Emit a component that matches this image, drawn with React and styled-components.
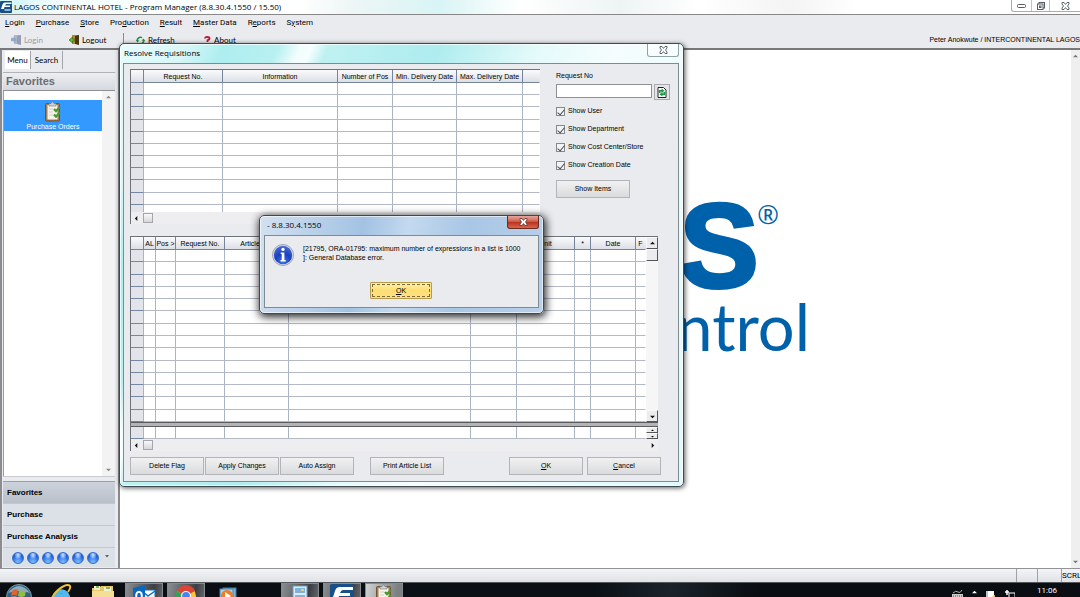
import React from 'react';
import styled, { createGlobalStyle, css } from 'styled-components';

const SANS = '"Liberation Sans", Arial, sans-serif';
const TOOL_FONT = 'Lato, "Liberation Sans", sans-serif';
const SEGOE = '"Open Sans", "Noto Sans", sans-serif';
const MENU_FONT = 'Roboto, "Liberation Sans", sans-serif';

const GlobalStyle = createGlobalStyle`
  * { box-sizing: border-box; }
  html, body { margin: 0; height: 100%; overflow: hidden; }
  #root { height: 100%; }
  body { font-family: ${SANS}; font-size: 7px; line-height: 10px; color: #000; background: #eaebef; }
  button, input { font: inherit; color: inherit; margin: 0; padding: 0; }
  svg { display: block; flex: none; }
`;

const Screen = styled.div`
  position: relative;
  display: flex;
  flex-direction: column;
  height: 100%;
  overflow: hidden;
`;

/* ---------- application frame ---------- */

const TitleBar = styled.header`
  display: flex;
  align-items: center;
  height: 15px;
  flex: none;
  border-bottom: 1px solid #8a8788;
  font-family: ${SEGOE};
  font-size: 8px;
  background: linear-gradient(90deg, #cdf3f6 0, #f4fdfd 60px, #fff 300px, #eef6f6 350px, #d9f4f5 440px, #fff 520px, #eef4f4 620px, #fff 700px, #f4f4f4 790px, #fff 860px);
`;

const AppTitle = styled.h1`
  margin: 0 auto 0 2px;
  font: inherit;
`;

const Caption = styled.div`
  display: flex;
  align-self: flex-start;
  height: 12px;
  border: 1px solid #a3b0b2;
  border-top: 0;
  border-right: 0;
  border-radius: 0 0 0 3px;
`;

const CaptionButton = styled.button`
  display: flex;
  align-items: center;
  justify-content: center;
  width: ${(p) => p.$w || 19}px;
  border: 0;
  border-left: ${(p) => (p.$first ? 0 : '1px solid #b9c4c6')};
  background: transparent;
`;

const MenuBar = styled.nav`
  display: flex;
  gap: 11px;
  align-items: center;
  height: 17px;
  flex: none;
  padding: 0 0 1px 5px;
  font-family: ${MENU_FONT};
  font-size: 8px;
`;

const MenuLink = styled.a`
  color: #000;
  text-decoration: none;
`;

const Toolbar = styled.div`
  display: flex;
  align-items: center;
  height: 18px;
  flex: none;
  border-bottom: 2px solid #777879;
`;

const ToolButton = styled.button`
  display: flex;
  align-items: center;
  gap: ${(p) => p.$gap || 2}px;
  width: ${(p) => p.$w}px;
  padding-left: ${(p) => p.$pad || 0}px;
  border: 0;
  background: transparent;
  font: 8px/10px ${TOOL_FONT};
  color: ${(p) => (p.disabled ? '#9a9ca2' : '#000')};
`;

const ToolDivider = styled.span`
  width: 1px;
  height: 14px;
  background: #8c8c90;
`;

const UserName = styled.span`
  margin-left: auto;
  white-space: nowrap;
`;

const Main = styled.main`
  display: flex;
  flex: 1;
  min-height: 0;
`;

/* ---------- sidebar ---------- */

const Sidebar = styled.aside`
  display: flex;
  flex-direction: column;
  width: 116px;
  flex: none;
  padding: 0 1px 1px 1px;
  border-left: 2px solid #8b8c90;
  background: #eaebef;
`;

const Tabs = styled.div`
  display: flex;
  height: 22px;
  padding: 1px 0 3px 2px;
`;

const Tab = styled.button`
  width: ${(p) => p.$w}px;
  border: 0;
  border-right: 1px solid #a4a5a9;
  background: ${(p) => (p.$active ? '#fff' : 'transparent')};
  font: 8px/10px ${TOOL_FONT};
`;

const SideHeading = styled.h2`
  margin: 0;
  height: 19px;
  padding-left: 3px;
  border-top: 1px solid #b0b2b8;
  border-bottom: 1px solid #8d9097;
  background: linear-gradient(#eceef1, #d5d8de);
  font: bold 11px/17px ${SANS};
  color: #6b6d72;
`;

const ShortcutList = styled.div`
  display: flex;
  flex: 1;
  margin-bottom: 4px;
  border-bottom: 1px solid #c9cbd0;
  background: #fff;
`;

const Shortcuts = styled.div`
  flex: 1;
  padding-top: 9px;
  border-left: 1px solid #9a9ca0;
`;

const Shortcut = styled.button`
  display: flex;
  flex-direction: column;
  align-items: center;
  width: 100%;
  height: 31px;
  padding-top: 1px;
  border: 0;
  background: #3399ff;
  color: #fff;
`;

const Track = styled.div`
  display: flex;
  flex-direction: column;
  justify-content: space-between;
  align-items: center;
  width: ${(p) => p.$w}px;
  flex: none;
  padding: 4px 0;
  background: ${(p) => p.$bg};
`;

const GroupButton = styled.button`
  height: 22px;
  padding-left: 4px;
  border: 0;
  border-top: 1px solid ${(p) => (p.$active ? '#9a9fa8' : '#c3c8d0')};
  background: ${(p) => (p.$active ? 'linear-gradient(#cdd3dc, #b9c0ca)' : '#dce0e7')};
  font: bold 8px/10px ${SANS};
  text-align: left;
`;

const DotRow = styled.div`
  display: flex;
  align-items: center;
  gap: 3px;
  height: 20px;
  padding-left: 9px;
  border-top: 1px solid #c3c8d0;
  background: #dce0e7;
`;

const Dot = styled.button`
  width: 12px;
  height: 12px;
  border: 1px solid #3a6cc8;
  border-radius: 50%;
  background: radial-gradient(ellipse at 50% 20%, #cfe4ff 0, #5b97f2 35%, transparent 50%), radial-gradient(circle at 50% 90%, #7cc4ff, #1f5fdc 65%);
`;

const MoreButton = styled.button`
  display: flex;
  margin: 0 0 3px 3px;
  border: 0;
  background: transparent;
`;

const Canvas = styled.section`
  display: flex;
  justify-content: space-between;
  flex: 1;
  min-width: 0;
  margin-left: 2px;
  border-left: 2px solid #88898c;
  background: #fff;
`;

const Brand = styled.div`
  display: flex;
  flex-direction: column;
  align-items: flex-end;
  width: 690px;
  padding-top: 144px;
  color: #0061ab;
`;

const BrandTop = styled.div`
  display: flex;
  margin-right: 31px;
  font: bold 118px/104px ${SANS};
  -webkit-text-stroke: 4px #0061ab;
`;

const Registered = styled.span`
  margin-left: -1px;
  font: 26px/40px ${SEGOE};
  -webkit-text-stroke: 0;
`;

const BrandSub = styled.div`
  font: 65px/56px Lato, sans-serif;
`;

/* ---------- status bar and taskbar ---------- */

const StatusBar = styled.footer`
  display: flex;
  height: 14px;
  flex: none;
  border-top: 1px solid #929396;
  background: linear-gradient(#f4f5f7, #dfe1e5);
  font-family: ${MENU_FONT};
  font-size: 8px;
  line-height: 13px;
`;

const StatusCell = styled.span`
  width: ${(p) => p.$w}px;
  margin-left: ${(p) => (p.$first ? 'auto' : 0)};
  border-left: 1px solid #9fa1a5;
`;

const Taskbar = styled.div`
  display: flex;
  height: 15px;
  flex: none;
  border-top: 1px solid #53585d;
  background: linear-gradient(100deg, #0a0e13, #0b1016 55%, #1b222a 62%, #0a0e13 70%);
  overflow: hidden;
`;

const TaskItem = styled.button`
  display: flex;
  justify-content: center;
  width: 38px;
  height: 30px;
  margin-right: ${(p) => p.$after || 4}px;
  padding-top: 1px;
  border: 0;
  background: transparent;
  ${(p) => p.$open && css`
    border: 1px solid #868a8e;
    padding-top: 0;
    background: linear-gradient(100deg, #8c8f92, #3b3f43 70%, #6c7074);
  `}
  ${(p) => p.$current && css`
    background: linear-gradient(100deg, #d0d2d3, #7c8083 80%);
  `}
`;

const Tray = styled.div`
  display: flex;
  align-items: flex-start;
  gap: 9px;
  margin-left: auto;
  padding: 7px 5px 0 0;
`;

const Clock = styled.time`
  margin: -4px 18px 0 13px;
  font: 8px/10px ${MENU_FONT};
  color: #fff;
`;

/* ---------- windows ---------- */

const Window = styled.section`
  position: absolute;
  display: flex;
  flex-direction: column;
  border: 1px solid #3f4a50;
  border-radius: 5px;
`;

const RequisitionWindow = styled(Window)`
  left: 119px;
  top: 43px;
  width: 565px;
  padding: 0 4px 4px 3px;
  background: linear-gradient(115deg, #e6fbfc, #d8f7f8 60px, #aeeef0 95px, #b8f0f1 145px, #f2fdfd 165px, #f6feff 175px, #bff1f2 190px, #aeecef 290px, #e4fafa 380px, #f5fdfe 450px, #dff9fb);
  box-shadow: 1px 1px 5px rgba(0, 0, 0, 0.65), inset 0 0 0 1px rgba(255, 255, 255, 0.7);
`;

const MessageWindow = styled(Window)`
  left: 259px;
  top: 215px;
  width: 285px;
  padding: 0 4px 5px;
  background: linear-gradient(100deg, #d3e1f1, #a3c2e3 35%, #c3d9ef 50%, #a9c6e5 70%, #b9d1ea);
  box-shadow: 1px 2px 8px 1px rgba(0, 0, 0, 0.85), inset 0 0 0 1px rgba(255, 255, 255, 0.6);
`;

const WindowTitle = styled.header`
  display: flex;
  justify-content: space-between;
  height: 19px;
  font-family: ${SEGOE};
  font-size: 8px;
`;

const WindowName = styled.h2`
  margin: 0;
  padding-left: ${(p) => p.$pad || 1}px;
  font: inherit;
  line-height: 18px;
`;

const CloseButton = styled.button`
  display: flex;
  align-items: center;
  justify-content: center;
  width: 32px;
  height: 13px;
  border: 1px solid #8fa2a6;
  border-top: 0;
  border-radius: 0 0 3px 3px;
  background: rgba(255, 255, 255, 0.5);
  ${(p) => p.$danger && css`
    border-color: #6b2a24;
    background: linear-gradient(#e5a79b, #d1604e 45%, #b9301b 50%, #d8664c);
  `}
`;

const WindowBody = styled.div`
  padding: 5px 6px 6px;
  border: 1px solid #7e8c92;
  background: #eaebef;
`;

const TopArea = styled.div`
  display: flex;
  gap: 16px;
  margin-bottom: 12px;
`;

const GridBox = styled.div`
  width: ${(p) => p.$w}px;
  flex: none;
  border-left: 1px solid #6f7278;
  border-top: 1px solid #6f7278;
  background: #fff;
`;

const GridView = styled.div`
  display: flex;
  height: ${(p) => p.$h}px;
  overflow: hidden;
`;

const Table = styled.table`
  width: 100%;
  height: ${(p) => p.$h}px;
  flex: 1;
  min-width: 0;
  table-layout: fixed;
  border-collapse: separate;
  border-spacing: 0;
  line-height: 9px;

  th, td {
    padding: 0;
    border-right: 1px solid #a9b3c2;
    border-bottom: 1px solid #b3bac6;
    white-space: nowrap;
  }
  th {
    height: 13px;
    border-color: #75849b;
    background: linear-gradient(#fafbfc, #dcdfe6);
    font-weight: normal;
  }
  td:first-child {
    background: #e2e4ea;
    border-bottom-color: #7487a5;
  }
  td:last-child, th:last-child { border-right-color: transparent; }
`;

const HScroll = styled.div`
  display: flex;
  align-items: center;
  height: 12px;
  padding: 0 3px;
  background: #eeeef0;
`;

const HThumb = styled.span`
  width: 10px;
  height: 10px;
  margin: 0 auto 0 4px;
  border: 1px solid #a5a6aa;
  background: linear-gradient(#f8f8f9, #d6d7da);
`;

const VScroll = styled.div`
  display: flex;
  flex-direction: column;
  width: 12px;
  background: #f6f6f7;
`;

const ScrollButton = styled.button`
  display: flex;
  align-items: center;
  justify-content: center;
  width: 12px;
  height: ${(p) => p.$h || 12}px;
  margin-top: ${(p) => (p.$end ? 'auto' : 0)};
  border: 1px solid #f9f9f9;
  border-right-color: #55565a;
  border-bottom-color: #55565a;
  background: #ececee;
`;

const Splitter = styled.div`
  height: 5px;
  border-top: 1px solid #5b5c60;
  border-bottom: 1px solid #5b5c60;
  background: #b4b4b7;
`;

const Filters = styled.form`
  display: flex;
  flex-direction: column;
  align-items: flex-start;
  padding-top: 2px;
`;

const SearchRow = styled.div`
  display: flex;
  gap: 2px;
  margin: 3px 0 2px;
`;

const RequestInput = styled.input`
  width: 96px;
  height: 14px;
  border: 1px solid #8f9196;
  background: #fff;
`;

const IconButton = styled.button`
  display: flex;
  align-items: center;
  justify-content: center;
  width: 16px;
  height: 16px;
  border: 1px solid #a9aaad;
  background: #e4e5e8;
`;

const CheckLabel = styled.label`
  display: flex;
  align-items: center;
  gap: 3px;
  height: 18px;
`;

const CheckBox = styled.input`
  appearance: none;
  display: flex;
  justify-content: center;
  width: 9px;
  height: 9px;
  border: 1px solid #85888e;
  background: #f2f3f5;

  &:checked::after {
    content: '';
    width: 3px;
    height: 6px;
    border: solid #4a4d55;
    border-width: 0 1px 1px 0;
    transform: rotate(40deg);
  }
`;

const PushButton = styled.button`
  width: 74px;
  height: 18px;
  margin-left: ${(p) => p.$gap || 0}px;
  border: 1px solid #b3b4b7;
  background: linear-gradient(#f1f1f2, #dadbdd);
`;

const ShowButton = styled(PushButton)`
  margin-top: 6px;
`;

const Actions = styled.div`
  display: flex;
  margin: 6px 11px 0 0;
`;

const Group = styled.div`
  display: flex;
  gap: ${(p) => p.$gap}px;
  margin-left: ${(p) => (p.$end ? 'auto' : 0)};
`;

const MessageBody = styled(WindowBody)`
  display: flex;
  flex-direction: column;
  align-items: center;
  padding: 8px 8px 8px 7px;
`;

const MessageRow = styled.div`
  display: flex;
  gap: 9px;
  width: 100%;
  height: 38px;
`;

const MessageText = styled.p`
  margin: 0;
  line-height: 9px;
  white-space: nowrap;
`;

const DefaultButton = styled.button`
  width: 62px;
  height: 17px;
  border: 1px solid #b79a4a;
  border-radius: 1px;
  outline: 1px dashed #7d6a34;
  outline-offset: -3px;
  background: linear-gradient(#fff0b0, #ffdf72 50%, #fbe08a);
`;

/* ---------- drawings ---------- */

const Arrow = ({ dir = 'up', color = '#111', size = 5 }) => {
  const shapes = { up: '0,4 3,1 6,4', down: '0,2 3,5 6,2', left: '4,0 1,3 4,6', right: '2,0 5,3 2,6' };
  return <svg width={size} height={size} viewBox="0 0 6 6"><polygon points={shapes[dir]} fill={color} /></svg>;
};

const BrandMark = ({ size }) => (
  <svg width={size} height={size} viewBox="0 0 24 24">
    <rect width="24" height="24" rx="2" fill="#174f86" />
    <path d="M23 3H10Q6 3 5 7L2 16H8L9 12H20V9H10Q11 6 13 6H23Z" fill="#fff" />
    <rect x="9" y="16" width="12" height="4" fill="#8fb6d8" />
  </svg>
);

const CrossIcon = ({ color = '#4a535b', fill = '#fff' }) => (
  <svg width="9" height="8" viewBox="0 0 9 8">
    <path d="M1 .5H3L4.500 2.400L6 .5H8V2L6.500 4L8 6V7.500H6L4.500 5.600L3 7.500H1V6L2.500 4L1 2Z" fill={fill} stroke={color} strokeWidth=".9" />
  </svg>
);

const DoorIcon = ({ faded }) => (
  <svg width="11" height="10" viewBox="0 0 11 10" opacity={faded ? 0.6 : 1}>
    <rect x="3" y="0" width="7" height="9" fill={faded ? '#8795b0' : '#b78a2c'} />
    <path d="M6 1L10 0V10L6 9Z" fill={faded ? '#5d6c8d' : '#4a3514'} />
    <path d={faded ? 'M0 3H3V1L6 5L3 8V6H0Z' : 'M6 4H3.500V2L0 5L3.500 8V6H6Z'} fill={faded ? '#5877ad' : '#6cb52a'} stroke={faded ? '#8093b9' : '#33620f'} strokeWidth=".6" />
  </svg>
);

const RefreshIcon = () => (
  <svg width="9" height="9" viewBox="0 0 9 9" fill="none" stroke="#258a43" strokeWidth="1.500">
    <path d="M1.200 5A3.300 3.300 0 0 1 6 1.600M7.800 4A3.300 3.300 0 0 1 3 7.400" />
    <path d="M0 4L1.300 6.500L3.500 4.500ZM9 5L7.700 2.500L5.500 4.500Z" fill="#258a43" stroke="none" />
  </svg>
);

const HelpIcon = () => (
  <svg width="7" height="9" viewBox="0 0 7 9">
    <path d="M1 2.500Q1 1 3 1Q5.500 1 5.500 2.500Q5.500 4 3.500 4.200V6" fill="none" stroke="#b81c34" strokeWidth="1.800" />
    <circle cx="3.500" cy="8" r="1" fill="#b81c34" />
  </svg>
);

const SheetIcon = () => (
  <svg width="10" height="11" viewBox="0 0 10 11">
    <path d="M1 .5H6.500L9 3V10.500H1Z" fill="#fff" stroke="#222" />
    <path d="M2 6V3H4.500V1.500L7.500 3.700L4.500 6V4.500H3.500V6ZM8 5V8H5.500V9.500L2.500 7.300L5.500 5V6.500H6.500V5Z" fill="#159a3d" />
  </svg>
);

const ClipboardIcon = () => (
  <svg width="20" height="21" viewBox="0 0 20 21">
    <rect x="2.500" y="2.500" width="14" height="17.500" rx="1" fill="#a77b4c" stroke="#73522f" />
    <rect x="4.500" y="4" width="10" height="14.500" fill="#f5f3ea" />
    <path d="M6 5V2.500H8L9.500 .5L11 2.500H13V5Z" fill="#cfd2d4" stroke="#777" strokeWidth=".6" />
    <path d="M6 8H10M6 11H10M6 14H10" stroke="#d5d3c9" />
    <path d="M11 8L13 10L17 6M11 13.500L13 15.500L17 11.500" fill="none" stroke="#4a9a30" strokeWidth="2.400" />
  </svg>
);

const InfoIcon = () => (
  <svg width="22" height="22" viewBox="0 0 22 22">
    <defs>
      <radialGradient id="info" cx="50%" cy="85%" r="85%">
        <stop offset="0" stopColor="#3f77e8" /><stop offset=".5" stopColor="#1a3fc0" /><stop offset="1" stopColor="#4a6ed0" />
      </radialGradient>
    </defs>
    <circle cx="11" cy="11" r="10.500" fill="#dfe3ea" stroke="#8a8f9c" strokeWidth=".8" />
    <circle cx="11" cy="11" r="9.200" fill="url(#info)" />
    <circle cx="11" cy="5.400" r="1.700" fill="#fff" />
    <path d="M8.700 8.500H12.400V16H13.700V17.500H8.500V16H9.700V10H8.700Z" fill="#fff" />
  </svg>
);

const StartOrb = () => (
  <svg width="26" height="26" viewBox="0 0 26 26">
    <circle cx="13" cy="13" r="12.500" fill="#35607f" stroke="#7d98a8" />
    <path d="M2 9Q13-5 24 9Q13 5 2 9Z" fill="#b6cbd6" opacity=".7" />
    <path d="M6 7Q9 4 12 6L11 12Q8 10 5 12Z" fill="#e2632b" />
    <path d="M13 6Q17 8 20 6L19 12Q15 14 12 12Z" fill="#8fc046" />
    <path d="M5 13Q8 11 11 13L10 19Q7 17 4 19Z" fill="#45a4e0" />
    <path d="M12 13Q15 15 19 13L18 19Q14 21 11 19Z" fill="#f7c63c" />
  </svg>
);

const ExplorerIcon = () => (
  <svg width="22" height="24" viewBox="0 0 22 24">
    <path d="M17 17A6.500 6.500 0 1 1 17.500 11.500H6" fill="none" stroke="#52b9ee" strokeWidth="4" />
    <path d="M2 20Q0 13 8 6Q17-1 20 2Q21 4 18 8" fill="none" stroke="#f2c230" strokeWidth="2" />
  </svg>
);

const FolderIcon = () => (
  <svg width="24" height="22" viewBox="0 0 24 22">
    <path d="M1 4H8L10 2H22V21H1Z" fill="#e8c766" />
    <path d="M3 2H9V6H3ZM13 3H20V7H13Z" fill="#f5f0d4" />
    <path d="M5 3H8M15 4H19" stroke="#57a43f" strokeWidth="1.500" />
    <path d="M1 7H23V21H1Z" fill="#f5df96" />
  </svg>
);

const OutlookIcon = () => (
  <svg width="24" height="24" viewBox="0 0 24 24">
    <rect x="10" y="6" width="13" height="12" fill="#fff" stroke="#1070c4" />
    <path d="M10 7L16 12L23 7" fill="none" stroke="#1070c4" strokeWidth="1.500" />
    <path d="M1 4L13 1V22L1 19Z" fill="#0a67bd" />
    <ellipse cx="7" cy="11.500" rx="2.800" ry="3.800" fill="none" stroke="#fff" strokeWidth="2" />
  </svg>
);

const ChromeIcon = () => (
  <svg width="22" height="22" viewBox="0 0 22 22">
    <circle cx="11" cy="12" r="10" fill="#f8c832" />
    <path d="M11 12L2 7A10 10 0 0 1 20 7Z" fill="#de4435" />
    <path d="M11 12L2 7A10 10 0 0 0 10 22Z" fill="#32a351" />
    <circle cx="11" cy="12" r="5" fill="#fff" />
    <circle cx="11" cy="12" r="3.900" fill="#4285f4" />
  </svg>
);

const PlayerIcon = () => (
  <svg width="20" height="22" viewBox="0 0 20 22">
    <rect x="5" y="4" width="13" height="16" fill="#78b4dc" stroke="#3e7ba9" />
    <rect x="2" y="5" width="13" height="16" fill="#a9d1ea" stroke="#4a83ab" />
    <circle cx="9" cy="12" r="6" fill="#ee7d22" />
    <path d="M7 8L13 12L7 16Z" fill="#fff" />
  </svg>
);

const PanelIcon = () => (
  <svg width="20" height="22" viewBox="0 0 20 22">
    <rect x="3" y="2" width="14" height="19" fill="#dcebf5" stroke="#6e9bbc" />
    <rect x="5" y="4" width="10" height="5" fill="#7fb2db" />
    <path d="M11 6H14" stroke="#f2d264" strokeWidth="2" />
    <path d="M5 12H15M5 15H15" stroke="#8fb1c8" strokeWidth="2" />
  </svg>
);

/* ---------- data ---------- */

const MENU = [['', 'L', 'ogin'], ['', 'P', 'urchase'], ['', 'S', 'tore'], ['Pro', 'd', 'uction'], ['', 'R', 'esult'], ['', 'M', 'aster Data'], ['R', 'e', 'ports'], ['S', 'y', 'stem']];

const REQUEST_COLUMNS = [['', 13], ['Request No.', 79], ['Information', 115], ['Number of Pos', 55], ['Min. Delivery Date', 64], ['Max. Delivery Date', 66], ['', 17]];

const ITEM_COLUMNS = [['', 13], ['AL', 12], ['Pos >', 20], ['Request No.', 49], ['Article No.', 64], ['Article', 182], ['Qty', 46], ['Unit', 58], ['*', 16], ['Date', 45], ['F', 10]];

const FILTERS = ['Show User', 'Show Department', 'Show Cost Center/Store', 'Show Creation Date'];

function DataTable({ columns, rows, height, header = true, label }) {
  return (
    <Table $h={height} aria-label={label}>
      <colgroup>{columns.map(([, w], i) => <col key={i} style={{ width: w }} />)}</colgroup>
      {header && <thead><tr>{columns.map(([name], i) => <th key={i} scope="col">{name}</th>)}</tr></thead>}
      <tbody>
        {Array.from({ length: rows }, (_, r) => <tr key={r}>{columns.map((_, c) => <td key={c} />)}</tr>)}
      </tbody>
    </Table>
  );
}

function Requisitions() {
  return (
    <RequisitionWindow aria-label="Resolve Requisitions">
      <WindowTitle>
        <WindowName>Resolve Requisitions</WindowName>
        <CloseButton aria-label="Close"><CrossIcon /></CloseButton>
      </WindowTitle>
      <WindowBody>
        <TopArea>
          <GridBox $w={410}>
            <GridView $h={142}><DataTable columns={REQUEST_COLUMNS} rows={11} height={147} label="Requests" /></GridView>
            <HScroll><Arrow dir="left" /><HThumb /></HScroll>
          </GridBox>
          <Filters onSubmit={(e) => e.preventDefault()}>
            <label htmlFor="request">Request No</label>
            <SearchRow>
              <RequestInput id="request" />
              <IconButton type="button" aria-label="Reload"><SheetIcon /></IconButton>
            </SearchRow>
            {FILTERS.map((f) => <CheckLabel key={f}><CheckBox type="checkbox" defaultChecked />{f}</CheckLabel>)}
            <ShowButton type="button">Show Items</ShowButton>
          </Filters>
        </TopArea>
        <GridBox $w={528}>
          <GridView $h={185}>
            <DataTable columns={ITEM_COLUMNS} rows={14} height={185} label="Items" />
            <VScroll>
              <ScrollButton aria-label="Scroll up"><Arrow /></ScrollButton>
              <ScrollButton as="span" />
              <ScrollButton $end aria-label="Scroll down"><Arrow dir="down" /></ScrollButton>
            </VScroll>
          </GridView>
          <Splitter />
          <GridView $h={12}>
            <DataTable columns={ITEM_COLUMNS} rows={1} height={12} header={false} label="Totals" />
            <VScroll>
              <ScrollButton $h={6} aria-label="Previous"><Arrow size={3} /></ScrollButton>
              <ScrollButton $h={6} aria-label="Next"><Arrow dir="down" size={3} /></ScrollButton>
            </VScroll>
          </GridView>
          <HScroll><Arrow dir="left" /><HThumb /><Arrow dir="right" /></HScroll>
        </GridBox>
        <Actions>
          <Group $gap={1}>
            <PushButton>Delete Flag</PushButton>
            <PushButton>Apply Changes</PushButton>
            <PushButton>Auto Assign</PushButton>
            <PushButton $gap={15}>Print Article List</PushButton>
          </Group>
          <Group $gap={4} $end>
            <PushButton><u>O</u>K</PushButton>
            <PushButton><u>C</u>ancel</PushButton>
          </Group>
        </Actions>
      </WindowBody>
    </RequisitionWindow>
  );
}

function ErrorMessage() {
  return (
    <MessageWindow role="alertdialog" aria-label="8.8.30.4.1550">
      <WindowTitle>
        <WindowName $pad={3}>- 8.8.30.4.1550</WindowName>
        <CloseButton $danger aria-label="Close"><CrossIcon color="#6b3a36" /></CloseButton>
      </WindowTitle>
      <MessageBody>
        <MessageRow>
          <InfoIcon />
          <MessageText>
            [21795, ORA-01795: maximum number of expressions in a list is 1000<br />
            ]: General Database error.
          </MessageText>
        </MessageRow>
        <DefaultButton><u>O</u>K</DefaultButton>
      </MessageBody>
    </MessageWindow>
  );
}

export default function App() {
  return (
    <Screen>
      <GlobalStyle />
      <TitleBar>
        <BrandMark size={12} />
        <AppTitle>LAGOS CONTINENTAL HOTEL - Program Manager (8.8.30.4.1550 / 15.50)</AppTitle>
        <Caption>
          <CaptionButton $first aria-label="Minimize">
            <svg width="9" height="4" viewBox="0 0 9 4"><rect x=".5" y=".5" width="8" height="3" rx="1" fill="#fff" stroke="#555e66" /></svg>
          </CaptionButton>
          <CaptionButton $w={18} aria-label="Restore">
            <svg width="8" height="8" viewBox="0 0 8 8" fill="#fff" stroke="#555e66"><rect x="2" y=".5" width="5.500" height="5.500" /><rect x=".5" y="2" width="5.500" height="5.500" /><rect x="2.500" y="4" width="1.500" height="1.500" /></svg>
          </CaptionButton>
          <CaptionButton $w={31} aria-label="Close"><CrossIcon /></CaptionButton>
        </Caption>
      </TitleBar>
      <MenuBar>
        {MENU.map(([a, key, b]) => <MenuLink href="#" key={a + key + b}>{a}<u>{key}</u>{b}</MenuLink>)}
      </MenuBar>
      <Toolbar>
        <ToolButton $w={59} $pad={11} disabled><DoorIcon faded />Login</ToolButton>
        <ToolButton $w={64} $pad={10}><DoorIcon />Logout</ToolButton>
        <ToolDivider />
        <ToolButton $w={80} $pad={12} $gap={3}><RefreshIcon />Refresh</ToolButton>
        <ToolButton $w={50} $gap={3}><HelpIcon />About</ToolButton>
        <UserName>Peter Anokwute / INTERCONTINENTAL LAGOS</UserName>
      </Toolbar>
      <Main>
        <Sidebar>
          <Tabs><Tab $w={26} $active>Menu</Tab><Tab $w={32}>Search</Tab></Tabs>
          <SideHeading>Favorites</SideHeading>
          <ShortcutList>
            <Shortcuts><Shortcut><ClipboardIcon />Purchase Orders</Shortcut></Shortcuts>
            <Track $w={13} $bg="#f3f3f4"><Arrow color="#888" /><Arrow dir="down" color="#888" /></Track>
          </ShortcutList>
          <GroupButton $active>Favorites</GroupButton>
          <GroupButton>Purchase</GroupButton>
          <GroupButton>Purchase Analysis</GroupButton>
          <DotRow>
            {[1, 2, 3, 4, 5, 6].map((n) => <Dot key={n} aria-label={`Group ${n}`} />)}
            <MoreButton aria-label="More groups"><Arrow dir="down" color="#444" size={4} /></MoreButton>
          </DotRow>
        </Sidebar>
        <Canvas>
          <Brand>
            <BrandTop>MICROS<Registered>®</Registered></BrandTop>
            <BrandSub>Materials Control</BrandSub>
          </Brand>
          <Track $w={9} $bg="#efeff0"><Arrow color="#777" /><Arrow dir="down" color="#777" /></Track>
        </Canvas>
      </Main>
      <StatusBar>
        <StatusCell $first $w={21} />
        <StatusCell $w={24} />
        <StatusCell $w={19}>SCRL</StatusCell>
      </StatusBar>
      <Taskbar>
        <TaskItem><StartOrb /></TaskItem>
        <TaskItem><ExplorerIcon /></TaskItem>
        <TaskItem $after={3}><FolderIcon /></TaskItem>
        <TaskItem $open><OutlookIcon /></TaskItem>
        <TaskItem $open><ChromeIcon /></TaskItem>
        <TaskItem $after={34}><PlayerIcon /></TaskItem>
        <TaskItem $open><PanelIcon /></TaskItem>
        <TaskItem $open><BrandMark size={24} /></TaskItem>
        <TaskItem $open $current><ClipboardIcon /></TaskItem>
        <Tray>
          <svg width="11" height="12" viewBox="0 0 11 12"><path d="M1 3Q4 0 6 2T10 0" fill="none" stroke="#aaa" /><rect x="0" y="4" width="11" height="7" fill="#ccc" /><path d="M1 6H10M1 8H10" stroke="#555" strokeDasharray="1 1" /></svg>
          <Arrow color="#fff" />
          <svg width="10" height="12" viewBox="0 0 10 12"><path d="M1 1V12" stroke="#fff" strokeWidth="1.500" /><path d="M2 1H8V7H2Z" fill="#fff" /><path d="M6 6L9 5V9Z" fill="#e7d24a" /></svg>
          <svg width="10" height="12" viewBox="0 0 10 12" fill="none" stroke="#fff"><path d="M2 0V5M0 2H4" strokeWidth="1.500" /><rect x="4" y="3" width="6" height="7" /></svg>
          <Clock>11:06</Clock>
        </Tray>
      </Taskbar>
      <Requisitions />
      <ErrorMessage />
    </Screen>
  );
}
